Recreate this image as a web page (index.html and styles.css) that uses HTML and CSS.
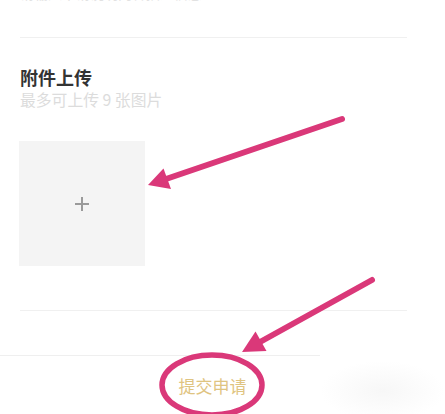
FILE: index.html
```html
<!DOCTYPE html>
<html lang="zh-CN">
<head>
<meta charset="utf-8">
<title>附件上传</title>
<link rel="stylesheet" href="styles.css">
</head>
<body>
<div class="page">
  <div class="prev">
    <div class="prev-text">请输入申请说明内容描述信息</div>
  </div>
  <div class="upload">
    <div class="title">附件上传</div>
    <div class="hint">最多可上传 9 张图片</div>
    <div class="box">
      <svg class="plus" width="16" height="16" viewBox="0 0 16 16"><path d="M8 1v14M1 8h14" stroke="#9a9a9a" stroke-width="2" fill="none"/></svg>
    </div>
  </div>
  <div class="bar">
    <span class="submit">提交申请</span>
  </div>
  <div class="patch"></div>
  <svg class="marks" width="445" height="414" viewBox="0 0 445 414">
    <g fill="#da3879" stroke="none">
      <line x1="342" y1="119" x2="166" y2="179" stroke="#da3879" stroke-width="6" stroke-linecap="round"/>
      <polygon points="148,185 171,189 163.5,168.5"/>
      <line x1="372" y1="280" x2="260" y2="342" stroke="#da3879" stroke-width="6" stroke-linecap="round"/>
      <polygon points="242,352 266.5,351 255.5,331.5"/>
    </g>
    <ellipse cx="212" cy="385" rx="50" ry="30" fill="none" stroke="#da3879" stroke-width="5.5"/>
  </svg>
</div>
</body>
</html>
```
FILE: styles.css
```css
* { box-sizing: border-box; }
html, body { margin: 0; padding: 0; background: #fff; }
body {
  font-family: "Noto Sans CJK SC", "Noto Sans", sans-serif;
  width: 445px;
  height: 414px;
  overflow: hidden;
}
.page {
  position: relative;
  width: 445px;
  height: 414px;
  overflow: hidden;
}
.prev {
  margin: 0 38px 0 20px;
  height: 38px;
  border-bottom: 1px solid #f0f0f0;
  overflow: hidden;
}
.prev-text {
  margin-top: -16px;
  font-size: 14px;
  line-height: 18px;
  color: #e2e2e2;
}
.upload {
  margin: 0 38px 0 20px;
  padding-top: 26px;
  padding-bottom: 44px;
  border-bottom: 1px solid #f0f0f0;
}
.title {
  font-size: 18px;
  line-height: 26px;
  font-weight: 700;
  color: #333;
}
.hint {
  font-size: 15.8px;
  line-height: 20px;
  color: #dcdcdc;
}
.box {
  margin-top: 31px;
  margin-left: -1px;
  width: 126px;
  height: 125px;
  background: #f4f4f4;
  display: flex;
  align-items: center;
  justify-content: center;
}
.bar {
  margin-top: 44px;
  height: 60px;
  border-top: 1px solid #efefef;
  display: flex;
  align-items: center;
  justify-content: center;
  padding-right: 20px;
}
.submit {
  font-size: 17px;
  color: #dfc481;
}
.patch {
  position: absolute;
  left: 320px;
  top: 353px;
  width: 125px;
  height: 61px;
  background: radial-gradient(ellipse 62px 30px at 50% 62%, #f7f7f7, #fff);
}
.marks {
  position: absolute;
  left: 0;
  top: 0;
}
```
